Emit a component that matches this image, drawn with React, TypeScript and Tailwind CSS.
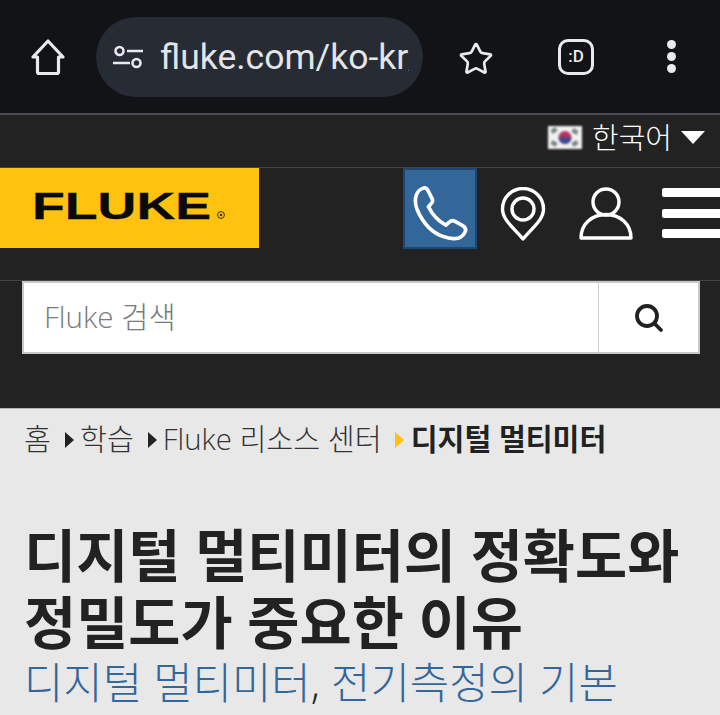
import { Star } from "lucide-react";

const krFont = "font-['Open_Sans','Noto_Sans_CJK_KR',sans-serif]";

function HomeIcon() {
  return (
    <svg width="38" height="38" viewBox="0 0 38 38" fill="none" stroke="#e8eaed" strokeWidth="3.2" strokeLinejoin="round">
      <path d="M19 3 L34 19 H29.5 V34 a1.5 1.5 0 0 1 -1.5 1.5 H10 a1.5 1.5 0 0 1 -1.5 -1.5 V19 H4 Z" />
    </svg>
  );
}

function TuneIcon() {
  return (
    <svg width="30" height="24" viewBox="0 0 30 24" fill="none" stroke="#e8eaed" strokeWidth="2.6" className="shrink-0">
      <circle cx="6.5" cy="6" r="4" />
      <circle cx="23.5" cy="18" r="4" />
      <path d="M14 6 H30 M0 18 H17" />
    </svg>
  );
}

function BrowserBar() {
  return (
    <div className="flex h-[113px] items-center bg-[#121317]">
      <div className="ml-[29px] flex w-[38px] justify-center">
        <HomeIcon />
      </div>
      <div className="ml-[29px] flex h-[80px] w-[327px] items-center rounded-[40px] bg-[#272b33] pl-[17px] pr-[14px]">
        <TuneIcon />
        <span className="ml-[17px] mt-[2px] overflow-hidden whitespace-nowrap font-['Roboto',sans-serif] text-[35.5px] text-[#e3e5e8]">
          fluke.com/ko-kr/
        </span>
      </div>
      <Star className="ml-[35px] mt-[4px] text-[#e8eaed]" size={36} strokeWidth={1.8} />
      <div className="ml-[64px] flex h-[36px] w-[36px] items-center justify-center rounded-[10px] border-[3px] border-[#e8eaed] font-['Roboto',sans-serif] text-[17px] font-medium text-[#e8eaed]">
        :D
      </div>
      <div className="ml-[73px] flex flex-col gap-[3px]">
        <span className="h-[9px] w-[9px] rounded-full bg-[#e8eaed]" />
        <span className="h-[9px] w-[9px] rounded-full bg-[#e8eaed]" />
        <span className="h-[9px] w-[9px] rounded-full bg-[#e8eaed]" />
      </div>
    </div>
  );
}

function KoreaFlag() {
  return (
    <svg width="34" height="23" viewBox="0 0 34 23" className="blur-[0.8px]">
      <rect width="34" height="23" fill="#f2f0f0" />
      <circle cx="17" cy="11.5" r="6.5" fill="#b8335f" />
      <path d="M10.5 11.5 a6.5 6.5 0 0 0 13 0 Z" fill="#3a4a94" />
      <path d="M3 5 L8 2 M4 7 L9 4 M25 3 L30 6 M24 5 L29 8 M3 17 L8 20 M4 15 L9 18 M25 20 L30 17 M24 18 L29 15" stroke="#4b6a60" strokeWidth="1.6" />
    </svg>
  );
}

function LanguageBar() {
  return (
    <div className="flex h-[55px] items-center justify-end border-t-2 border-b border-[#4b4c50] border-b-[#444444] bg-[#222222] pb-[8px] pr-[15px]">
      <KoreaFlag />
      <span className={`ml-[10px] text-[29px] font-light leading-none text-white ${krFont}`}>한국어</span>
      <span className="ml-[9px] h-0 w-0 border-x-[12px] border-t-[13px] border-x-transparent border-t-white" />
    </div>
  );
}

function FlukeLogo() {
  return (
    <div className="h-[80px] w-[259px] shrink-0 bg-[#ffc20e]">
      <svg width="259" height="80" viewBox="0 0 259 80">
        <text
          x="32"
          y="51"
          textLength="179"
          lengthAdjust="spacingAndGlyphs"
          fontFamily="Liberation Sans"
          fontWeight="700"
          fontSize="36"
          fill="#0a0a0a"
          stroke="#0a0a0a"
          strokeWidth="0.3"
        >
          FLUKE
        </text>
        <circle cx="221" cy="47" r="3.4" fill="none" stroke="#3a3000" strokeWidth="1" />
        <circle cx="221" cy="47" r="1.2" fill="#3a3000" />
      </svg>
    </div>
  );
}

function HeaderIcons() {
  return (
    <>
      <div className="ml-[144px] flex h-[81px] w-[74px] shrink-0 items-start justify-center border-2 border-[#1c4673] bg-[#336699] pt-[15px]">
        {/* handset traced from the reference */}
        <svg width="57" height="57" viewBox="65 75 170 170" fill="none" stroke="#ffffff" strokeWidth="11" strokeLinejoin="round">
          <path d="M100 84 C106 83 110 86 113 92 L126 118 C128 124 126 128 120 133 L114 140 C126 164 142 182 166 195 L176 186 C181 181 186 180 192 183 L216 196 C224 201 227 208 223 216 C216 230 204 236 188 235 C150 232 118 212 96 178 C80 154 70 132 77 108 C80 96 90 86 100 84 Z" />
        </svg>
      </div>
      <svg width="46" height="56" viewBox="0 0 46 56" fill="none" stroke="#ffffff" strokeWidth="3.4" strokeLinejoin="round" className="ml-[23px] mt-[19px] shrink-0">
        <path d="M23 52 C14 41 2.5 33 2.5 22 A20.5 20.5 0 0 1 43.5 22 C43.5 33 32 41 23 52 Z" />
        <circle cx="23" cy="22" r="11" />
      </svg>
      <svg width="54" height="54" viewBox="0 0 54 54" fill="none" stroke="#ffffff" strokeWidth="3.4" strokeLinejoin="round" className="ml-[33px] mt-[19px] shrink-0">
        <circle cx="27" cy="15" r="13" />
        <path d="M2 51 C2 37 13 27.5 27 27.5 C41 27.5 52 37 52 51 Z" />
      </svg>
      <div className="ml-[29px] mt-[20px] flex w-[58px] shrink-0 flex-col gap-[11.5px]">
        <span className="h-[9px] rounded-l-[2px] bg-white" />
        <span className="h-[9px] rounded-l-[2px] bg-white" />
        <span className="h-[9px] rounded-l-[2px] bg-white" />
      </div>
    </>
  );
}

function SearchBox() {
  return (
    <div className="flex h-[128px] flex-col border-t border-[#444444] bg-[#222222] pl-[22px] pr-[20px]">
      <div className="flex h-[73px] border-2 border-[#c8c8c8] bg-white">
        <div className={`flex flex-1 items-center pl-[20px] text-[29.6px] font-light text-[#7a7a7a] ${krFont}`}>
          Fluke 검색
        </div>
        <div className="flex w-[100px] items-center justify-center border-l border-[#d4d4d4]">
          <svg width="30" height="30" viewBox="0 0 30 30" fill="none" stroke="#222222" strokeWidth="3.8" strokeLinecap="round">
            <circle cx="13" cy="13" r="10" />
            <path d="M20.5 20.5 L27 27" />
          </svg>
        </div>
      </div>
    </div>
  );
}

function Crumb({ text }: { text: string }) {
  return (
    <>
      <span className="ml-[14px] mr-[6px] h-0 w-0 border-y-[8px] border-l-[9px] border-y-transparent border-l-[#222222]" />
      <span>{text}</span>
    </>
  );
}

function Article() {
  return (
    <div className={`border-t border-[#b5b5b5] bg-[#e8e8e8] pl-[24px] ${krFont}`}>
      <div className="flex h-[62px] items-center whitespace-nowrap text-[29.3px] font-light leading-none text-[#333333]">
        <span>홈</span>
        <Crumb text="학습" />
        <Crumb text="Fluke 리소스 센터" />
        <span className="ml-[13px] mr-[7px] h-0 w-0 border-y-[8px] border-l-[9px] border-y-transparent border-l-[#ffc20e]" />
        <span className="text-[29.2px] font-bold text-[#222222]">디지털 멀티미터</span>
      </div>
      <h1 className="mt-[51px] whitespace-nowrap text-[56.7px] font-bold leading-[67px] text-[#222222]">
        디지털 멀티미터의 정확도와
        <br />
        정밀도가 중요한 이유
      </h1>
      <p className="mt-[-1px] whitespace-nowrap text-[42.8px] font-light leading-[56px] text-[#336699]">
        디지털 멀티미터<span className="text-[#222222]">,</span> 전기측정의 기본
      </p>
    </div>
  );
}

export default function App() {
  return (
    <div className="h-[715px] w-[720px] overflow-hidden bg-[#e8e8e8]">
      <BrowserBar />
      <LanguageBar />
      <div className="flex h-[112px] items-start overflow-hidden bg-[#222222]">
        <FlukeLogo />
        <HeaderIcons />
      </div>
      <SearchBox />
      <Article />
    </div>
  );
}
